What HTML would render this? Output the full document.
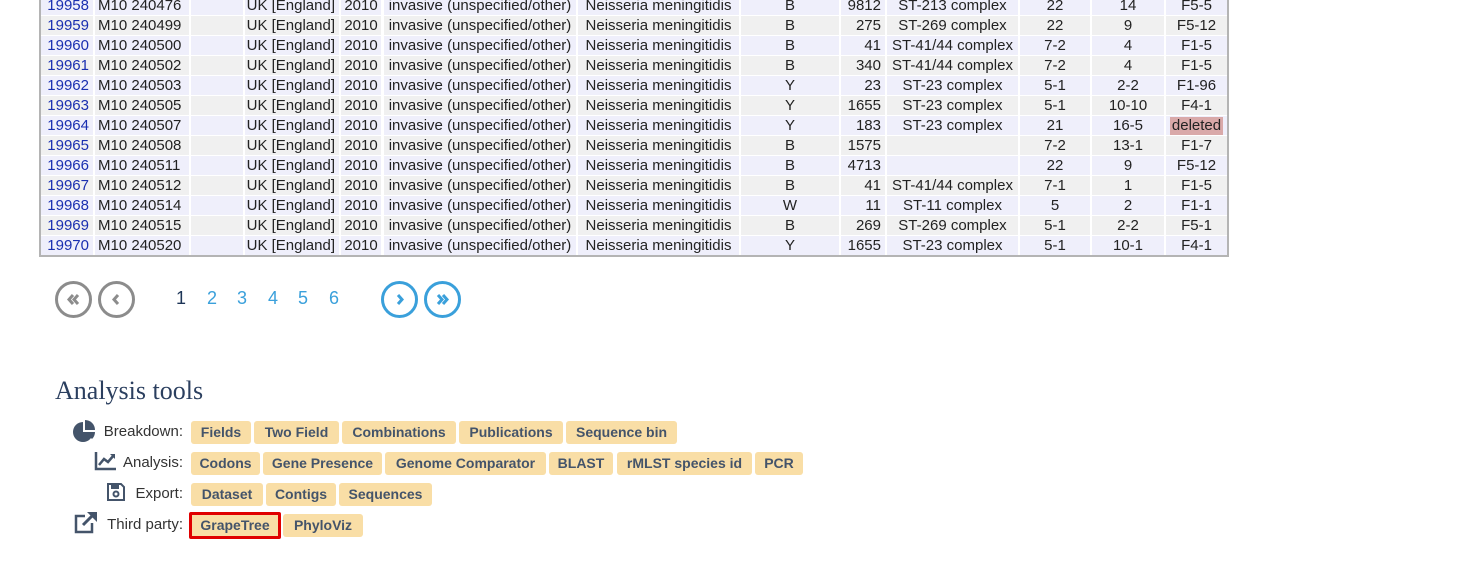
<!DOCTYPE html>
<html><head><meta charset="utf-8"><style>
*{margin:0;padding:0;box-sizing:border-box}
body{width:1462px;height:565px;background:#fff;position:relative;overflow:hidden;font-family:"Liberation Sans",sans-serif;color:#222}
.tbl{position:absolute;left:39px;top:-4px;width:1190px;height:261px;border:2px solid #b4b4b4;border-top:none;background:#fff}
.r{position:absolute;left:0;height:20px;width:1186px;font-size:15px;line-height:20px}
.c{position:absolute;top:0;height:19px;white-space:nowrap;overflow:hidden}
.a{background:#efeffb}.b{background:#f0f0f0}
.id{color:#1a2fb0}
.pg{position:absolute;top:281px;width:37px;height:37px;border-radius:50%;border:3px solid #8c8c8c}
.pg.bl{border-color:#3aa0db}
.pg svg{left:0;top:0}
.num{position:absolute;top:288px;font-size:18px;color:#3aa0db}
h2{position:absolute;left:55px;top:376px;font-family:"Liberation Serif",serif;font-weight:normal;font-size:26px;color:#2b3f5f}
.lb{position:absolute;width:130px;left:53px;text-align:right;font-size:15px;color:#333;line-height:22px}
.bt{position:absolute;height:23px;background:#f9dea6;border-radius:3px;color:#44546a;font-weight:bold;font-size:14px;text-align:center;line-height:23px;white-space:nowrap}
svg{position:absolute}
</style></head><body>
<div class="tbl" id="t"></div>
<div class="pg" style="left:55px"><svg width="31" height="31" viewBox="0 0 31 31"><path d="M15 11 L11 15.5 L15 20 M20 11 L16 15.5 L20 20" stroke="#8c8c8c" stroke-width="3" fill="none"/></svg></div>
<div class="pg" style="left:98px"><svg width="31" height="31" viewBox="0 0 31 31"><path d="M17 11 L13 15.5 L17 20" stroke="#8c8c8c" stroke-width="3" fill="none"/></svg></div>
<div class="num" style="left:176px;color:#1d3557">1</div>
<div class="num" style="left:207px">2</div>
<div class="num" style="left:237px">3</div>
<div class="num" style="left:268px">4</div>
<div class="num" style="left:298px">5</div>
<div class="num" style="left:329px">6</div>
<div class="pg bl" style="left:381px"><svg width="31" height="31" viewBox="0 0 31 31"><path d="M14 11 L18 15.5 L14 20" stroke="#3aa0db" stroke-width="3" fill="none"/></svg></div>
<div class="pg bl" style="left:424px"><svg width="31" height="31" viewBox="0 0 31 31"><path d="M11 11 L15 15.5 L11 20 M16 11 L20 15.5 L16 20" stroke="#3aa0db" stroke-width="3" fill="none"/></svg></div>
<h2>Analysis tools</h2>
<svg style="left:72px;top:419px" width="26" height="24" viewBox="0 0 26 24"><path d="M11 3 A10 10 0 1 0 21 13 L11 13 Z" fill="#44546a"/><path d="M13 1 A10 10 0 0 1 23 11 L13 11 Z" fill="#44546a"/><path d="M13 13 L23 13 A10 10 0 0 1 20 20 Z" fill="#44546a"/></svg>
<div class="lb" style="top:421px">Breakdown:</div>
<svg style="left:94px;top:451px" width="24" height="20" viewBox="0 0 24 20"><path d="M2 1 V18 H22" stroke="#44546a" stroke-width="2.5" fill="none"/><path d="M5 14 L10 8 L14 11 L20 4" stroke="#44546a" stroke-width="2.5" fill="none"/><path d="M16 3 H21 V8Z" fill="#44546a"/></svg>
<div class="lb" style="top:452px">Analysis:</div>
<svg style="left:106px;top:482px" width="20" height="20" viewBox="0 0 20 20"><path d="M2 2 H15 L18 5 V18 H2 Z" stroke="#44546a" stroke-width="2" fill="none"/><rect x="5" y="3" width="8" height="4" fill="#44546a"/><circle cx="10" cy="12" r="2.5" stroke="#44546a" stroke-width="2" fill="none"/></svg>
<div class="lb" style="top:483px">Export:</div>
<svg style="left:73px;top:511px" width="26" height="24" viewBox="0 0 26 24"><path d="M12 5 H3 V21 H19 V12" stroke="#44546a" stroke-width="2.5" fill="none"/><path d="M10 14 L21 3" stroke="#44546a" stroke-width="3"/><path d="M14 1 H24 V11Z" fill="#44546a"/></svg>
<div class="lb" style="top:514px">Third party:</div>
<div class="bt" style="left:191px;top:421px;width:60px">Fields</div>
<div class="bt" style="left:254px;top:421px;width:85px">Two Field</div>
<div class="bt" style="left:342px;top:421px;width:114px">Combinations</div>
<div class="bt" style="left:459px;top:421px;width:104px">Publications</div>
<div class="bt" style="left:566px;top:421px;width:111px">Sequence bin</div>
<div class="bt" style="left:191px;top:452px;width:69px">Codons</div>
<div class="bt" style="left:263px;top:452px;width:119px">Gene Presence</div>
<div class="bt" style="left:385px;top:452px;width:161px">Genome Comparator</div>
<div class="bt" style="left:549px;top:452px;width:64px">BLAST</div>
<div class="bt" style="left:617px;top:452px;width:135px">rMLST species id</div>
<div class="bt" style="left:755px;top:452px;width:48px">PCR</div>
<div class="bt" style="left:191px;top:483px;width:72px">Dataset</div>
<div class="bt" style="left:266px;top:483px;width:70px">Contigs</div>
<div class="bt" style="left:339px;top:483px;width:93px">Sequences</div>
<div class="bt" style="left:189px;top:512px;width:92px;height:27px;border:3px solid #e00000;border-radius:2px;line-height:21px">GrapeTree</div>
<div class="bt" style="left:283px;top:514px;width:80px">PhyloViz</div>
<script>
var rows=[
["19958","M10 240476","B","9812","ST-213 complex","22","14","F5-5"],
["19959","M10 240499","B","275","ST-269 complex","22","9","F5-12"],
["19960","M10 240500","B","41","ST-41/44 complex","7-2","4","F1-5"],
["19961","M10 240502","B","340","ST-41/44 complex","7-2","4","F1-5"],
["19962","M10 240503","Y","23","ST-23 complex","5-1","2-2","F1-96"],
["19963","M10 240505","Y","1655","ST-23 complex","5-1","10-10","F4-1"],
["19964","M10 240507","Y","183","ST-23 complex","21","16-5","deleted"],
["19965","M10 240508","B","1575","","7-2","13-1","F1-7"],
["19966","M10 240511","B","4713","","22","9","F5-12"],
["19967","M10 240512","B","41","ST-41/44 complex","7-1","1","F1-5"],
["19968","M10 240514","W","11","ST-11 complex","5","2","F1-1"],
["19969","M10 240515","B","269","ST-269 complex","5-1","2-2","F5-1"],
["19970","M10 240520","Y","1655","ST-23 complex","5-1","10-1","F4-1"]];
var cols=[[0,52,'r'],[54,94,'l'],[150,52,''],[204,94,'r'],[300,40,''],[343,192,''],[537,161,''],[700,98,'c'],[800,44,'r'],[846,131,'c'],[979,70,'c'],[1051,72,'c'],[1125,61,'c']];
var h='';
rows.forEach(function(r,i){
var v=[r[0],r[1],'','UK [England]','2010','invasive (unspecified/other)','Neisseria meningitidis',r[2],r[3],r[4],r[5],r[6],r[7]];
h+='<div class="r" style="top:'+(i*20)+'px">';
cols.forEach(function(c,j){
var al=c[2]=='r'?'right':c[2]=='l'?'left':'center';
var pad=c[2]=='r'?'padding-right:4px;':c[2]=='l'?'padding-left:3px;':'';
var cls=(i%2?'b':'a')+(j==0?' id':'');
var txt=v[j];
if(j==12&&txt=='deleted')txt='<span style="background:#d9a9a9;padding:0 2px;display:inline-block;line-height:18px">deleted</span>';
h+='<div class="c '+cls+'" style="left:'+c[0]+'px;width:'+c[1]+'px;text-align:'+al+';'+pad+'">'+txt+'</div>';});
h+='</div>';});
document.getElementById('t').innerHTML=h;
</script>
</body></html>
